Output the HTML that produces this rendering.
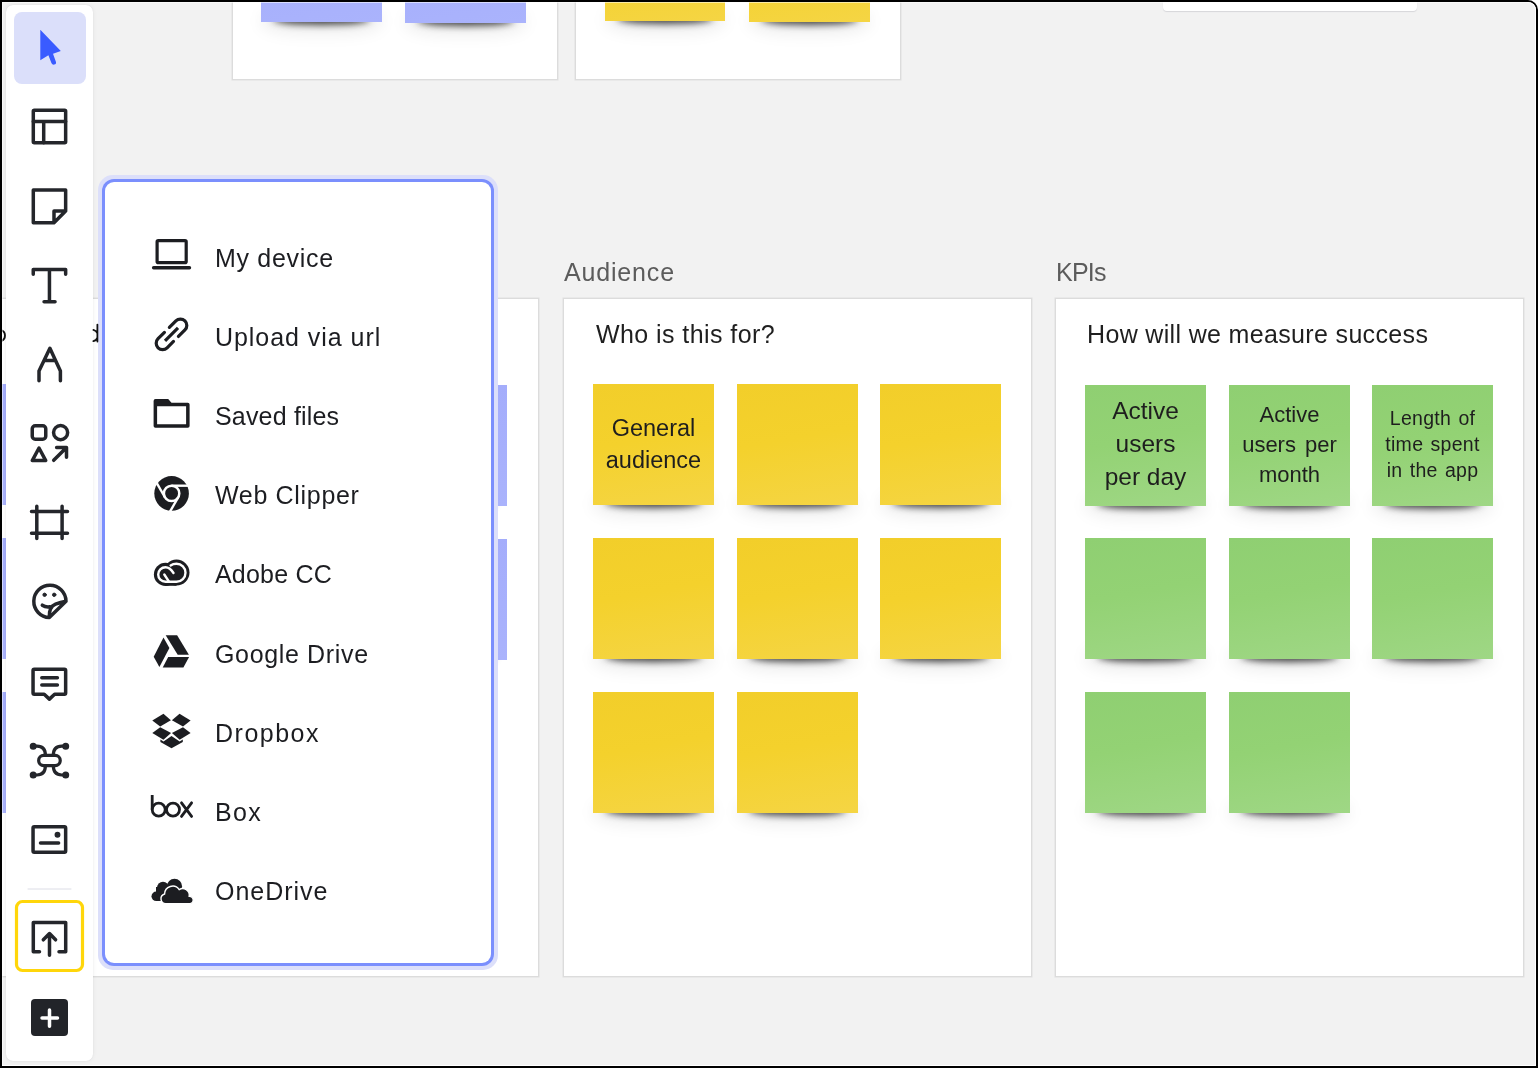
<!DOCTYPE html>
<html><head><meta charset="utf-8">
<style>
*{box-sizing:border-box;margin:0;padding:0}
html,body{width:1538px;height:1068px;overflow:hidden;background:#fff;font-family:"Liberation Sans",sans-serif}
#win{position:absolute;left:0;top:0;width:1538px;height:1068px;border:2px solid #000;border-top-right-radius:10px;overflow:hidden;background:#fff}
#cv{position:absolute;left:0;top:0;right:0;bottom:0;background:#f2f2f2;border-top-right-radius:8px;overflow:hidden}
#ov{position:absolute;left:0;top:0;right:0;bottom:0;border-top-right-radius:8px;box-shadow:inset 0 1px 0 rgba(255,255,255,.55),inset 1px 0 0 rgba(255,255,255,.5),inset -1px 0 0 #fff,inset 0 -1px 0 #fff;pointer-events:none}
/* all children of cv positioned in page coordinates: cv is at (3,3) */
.a{position:absolute}
.frame{position:absolute;background:#fff;border:1px solid #dcdcdc;box-shadow:0 0 0 .6px rgba(0,0,0,.06)}
.st{position:absolute;width:121px;height:121px}
.st .b{position:absolute;left:0;top:0;width:100%;height:100%}
.st .sh{position:absolute;left:12px;right:12px;top:113px;height:11px;background:rgba(30,30,30,.82);filter:blur(3.5px);border-radius:50%}
.st .sh2{position:absolute;left:0;right:0;top:106px;height:28px;background:rgba(0,0,0,.06);filter:blur(7px);border-radius:40%}
.y .b{background:linear-gradient(170deg,#f2ce2a 0%,#f4d12c 45%,#f5d544 100%)}
.g .b{background:linear-gradient(170deg,#8fcf72 0%,#93d274 45%,#9fd785 100%)}
.p .b{background:linear-gradient(170deg,#a3acfb 0%,#a7b0fc 60%,#aab3fc 100%)}
.st .t{position:absolute;will-change:transform;left:0;top:0;width:100%;height:100%;display:flex;align-items:center;justify-content:center;text-align:center;color:#1e1e1e;font-size:23.5px;line-height:31.5px}
.lbl{position:absolute;will-change:transform;color:#5c5c5c;font-size:25px;letter-spacing:.4px;white-space:nowrap}
.ttl{position:absolute;will-change:transform;color:#1f1f1f;font-size:25px;white-space:nowrap}
#tb{position:absolute;left:3px;top:2px;width:87px;height:1056px;background:#fff;border-radius:7px;box-shadow:0 0 1px rgba(40,40,70,.12),0 0 5px rgba(0,0,0,.06)}
#pop{position:absolute;left:95px;top:172px;width:400px;height:795px;border-radius:15px;background:#dcdffa}
#pop .in{position:absolute;left:4px;top:4px;right:4px;bottom:4px;border-radius:12px;background:#7b8ffd}
#pop .in2{position:absolute;left:3px;top:3px;right:3px;bottom:3px;border-radius:9px;background:#fff}
.mi{position:absolute;will-change:transform;margin-top:1px;left:215.3px;font-size:25px;line-height:28px;color:#1c1d21;letter-spacing:.6px;white-space:nowrap}
svg{position:absolute;overflow:visible}
</style></head><body>
<div id="win"><div id="cv">
<!-- content placed with coordinates relative to cv (page - 3) -->
<div class="a" style="left:-2px;top:-2px;width:1538px;height:1068px">

<!-- top frames -->
<div class="frame" style="left:232px;top:-40px;width:326px;height:120px"></div>
<div class="frame" style="left:575px;top:-40px;width:326px;height:120px"></div>
<div class="st p" style="left:261px;top:-99px;width:121px"><div class="sh2"></div><div class="sh"></div><div class="b"></div></div>
<div class="st p" style="left:405px;top:-98px;width:121px"><div class="sh2"></div><div class="sh"></div><div class="b"></div></div>
<div class="st y" style="left:605px;top:-100px;width:120px"><div class="sh2"></div><div class="sh"></div><div class="b"></div></div>
<div class="st y" style="left:749px;top:-99px;width:121px"><div class="sh2"></div><div class="sh"></div><div class="b"></div></div>

<!-- top-right tab -->
<div class="a" style="left:1163px;top:-10.5px;width:254px;height:21px;background:#fff;border-radius:4px;box-shadow:0 1px 1px rgba(60,60,90,.15)"></div>

<!-- main frames -->
<div class="frame" style="left:-200px;top:298px;width:739px;height:679px"></div>
<div class="frame" style="left:563px;top:298px;width:469px;height:679px"></div>
<div class="frame" style="left:1055px;top:298px;width:469px;height:679px"></div>

<div class="lbl" style="left:564px;top:257.5px;letter-spacing:.83px">Audience</div>
<div class="lbl" style="left:1056px;top:257.5px;letter-spacing:-.75px">KPIs</div>
<div class="ttl" style="left:596px;top:320px;letter-spacing:.43px">Who is this for?</div>
<div class="ttl" style="left:1086.6px;top:320px;letter-spacing:.34px">How will we measure success</div>

<!-- yellow stickies -->
<div class="st y" style="left:593px;top:384px"><div class="sh2"></div><div class="sh"></div><div class="b"></div><div class="t">General<br>audience</div></div>
<div class="st y" style="left:737px;top:384px"><div class="sh2"></div><div class="sh"></div><div class="b"></div></div>
<div class="st y" style="left:880px;top:384px"><div class="sh2"></div><div class="sh"></div><div class="b"></div></div>
<div class="st y" style="left:593px;top:538px"><div class="sh2"></div><div class="sh"></div><div class="b"></div></div>
<div class="st y" style="left:737px;top:538px"><div class="sh2"></div><div class="sh"></div><div class="b"></div></div>
<div class="st y" style="left:880px;top:538px"><div class="sh2"></div><div class="sh"></div><div class="b"></div></div>
<div class="st y" style="left:593px;top:692px"><div class="sh2"></div><div class="sh"></div><div class="b"></div></div>
<div class="st y" style="left:737px;top:692px"><div class="sh2"></div><div class="sh"></div><div class="b"></div></div>

<!-- green stickies -->
<div class="st g" style="left:1085px;top:385px"><div class="sh2"></div><div class="sh"></div><div class="b"></div><div class="t" style="font-size:24.5px;line-height:33px;top:-2px">Active<br>users<br>per day</div></div>
<div class="st g" style="left:1229px;top:385px"><div class="sh2"></div><div class="sh"></div><div class="b"></div><div class="t" style="font-size:22px;line-height:30px;top:-1.3px;word-spacing:3px">Active<br>users per<br>month</div></div>
<div class="st g" style="left:1372px;top:385px"><div class="sh2"></div><div class="sh"></div><div class="b"></div><div class="t" style="font-size:19.5px;line-height:26px;top:-2px;letter-spacing:.3px;word-spacing:1.5px">Length of<br>time spent<br>in the app</div></div>
<div class="st g" style="left:1085px;top:538px"><div class="sh2"></div><div class="sh"></div><div class="b"></div></div>
<div class="st g" style="left:1229px;top:538px"><div class="sh2"></div><div class="sh"></div><div class="b"></div></div>
<div class="st g" style="left:1372px;top:538px"><div class="sh2"></div><div class="sh"></div><div class="b"></div></div>
<div class="st g" style="left:1085px;top:692px"><div class="sh2"></div><div class="sh"></div><div class="b"></div></div>
<div class="st g" style="left:1229px;top:692px"><div class="sh2"></div><div class="sh"></div><div class="b"></div></div>

<!-- left hidden stickies -->
<div class="st p" style="left:-115px;top:384px"><div class="sh"></div><div class="b"></div></div>
<div class="st p" style="left:-115px;top:538px"><div class="sh"></div><div class="b"></div></div>
<div class="st p" style="left:-115px;top:692px"><div class="sh"></div><div class="b"></div></div>
<div class="st p" style="left:386px;top:385px"><div class="sh"></div><div class="b"></div></div>
<div class="st p" style="left:386px;top:539px"><div class="sh"></div><div class="b"></div></div>

<!-- toolbar -->
<div id="tb" style="left:6px;top:5px"></div>
<!-- toolbar icons -->
<div class="a" style="left:14px;top:12px;width:72px;height:72px;border-radius:8px;background:#dbdffa"></div>
<svg style="left:0;top:0" width="100" height="1068" viewBox="0 0 100 1068">
<g fill="none" stroke="#24262b" stroke-width="3.5" stroke-linecap="round" stroke-linejoin="round">
 <path d="M40.3 29.8 L60.8 50.9 L53 53.7 L55.9 61.8 Q56.6 64.2 54.2 64.6 Q52.2 64.9 51.4 63 L48.4 55.3 L40.3 60.2 Z" fill="#3a5bff" stroke="none"/>
 <rect x="33.3" y="110.15" width="32.35" height="32.6" rx="1"/>
 <path d="M33.3 121.4 H65.65 M43.7 121.4 V142.75"/>
 <path d="M33.3 190.1 H65.65 V211.1 L54 222.75 H33.3 Z M54 222.75 V211.1 H65.65"/>
 <path d="M33.25 274.2 V269.45 H65.65 V274.2 M49.45 269.45 V301.65 M44.05 301.65 H55.05"/>
 <path d="M39 380.8 V371 L49.9 348.3 L60.4 371 V380.8 M44.6 360.6 H55"/>
 <rect x="32.25" y="425.75" width="13.5" height="13.5" rx="3"/>
 <circle cx="60.6" cy="432.6" r="7.05"/>
 <path d="M39 448 L45.75 460.55 H32.25 Z"/>
 <path d="M53.7 460.3 L66 448 M56.6 447.5 H66.5 V457.3"/>
 <path d="M31.5 511.4 H67.5 M31.5 533.3 H67.5 M36.8 506.3 V538.5 M62.1 506.3 V538.5"/>
 <path d="M66 601.3 A16.1 16.1 0 1 0 49.3 617.5 L66 601.3 M49.3 617.5 Q48.9 606.8 55.5 604.2 Q60.5 602.3 66 601.3 M42.3 605.2 Q45.5 607.4 49.8 606.8"/>
 <circle cx="44.6" cy="594.8" r="1.7" fill="#24262b" stroke-width="1"/>
 <circle cx="54.2" cy="594.8" r="1.7" fill="#24262b" stroke-width="1"/>
 <path d="M34.3 669.25 H64.4 Q65.65 669.25 65.65 670.5 V693 Q65.65 694.25 64.4 694.25 H54.6 L49.4 699.1 L44.2 694.25 H34.3 Q33.05 694.25 33.05 693 V670.5 Q33.05 669.25 34.3 669.25 Z"/>
 <path d="M41.8 677.8 H57.4 M41.8 685 H57.4"/>
 <rect x="38.65" y="755.45" width="21.6" height="10.1" rx="5.05" stroke-width="3.2"/>
 <path d="M33.2 746.2 H37 Q45.4 746.2 45.4 755.4 M65.7 746.2 H61.7 Q53.3 746.2 53.3 755.4 M33.2 775 H37 Q45.4 775 45.4 765.6 M65.7 775 H61.7 Q53.3 775 53.3 765.6" stroke-width="3.2"/>
 <circle cx="33.2" cy="746.2" r="2" fill="#24262b" stroke-width="3"/>
 <circle cx="65.7" cy="746.2" r="2" fill="#24262b" stroke-width="3"/>
 <circle cx="33.2" cy="775" r="2" fill="#24262b" stroke-width="3"/>
 <circle cx="65.7" cy="775" r="2" fill="#24262b" stroke-width="3"/>
 <rect x="33.05" y="826.75" width="32.6" height="25.5" rx="1.2"/>
 <path d="M40.5 843 H58.6"/>
 <circle cx="57.5" cy="834.8" r="1.2" fill="#24262b"/>
 <path d="M28 889 H71" stroke="#dcdde6" stroke-width="1"/>
 <rect x="16.5" y="901.5" width="66" height="69" rx="6" stroke="#ffd60a" stroke-width="3.2"/>
 <path d="M39.5 951.7 H33.3 V922.45 H65.7 V951.7 H59 M49.5 955.2 V933.8 M43.3 939.8 L49.5 933.6 L55.6 939.8"/>
 <rect x="31" y="999" width="37" height="37" rx="4" fill="#222429" stroke="none"/>
 <path d="M42 1018 H57.5 M49.5 1010 V1026.3" stroke="#fff"/>
</g>
</svg>


<!-- popup -->
<div id="pop" style="left:98px;top:175px"><div class="in"><div class="in2"></div></div></div>
<!-- popup items -->
<div class="mi" style="top:243.2px;letter-spacing:0.69px">My device</div>
<div class="mi" style="top:322.0px;letter-spacing:0.95px">Upload via url</div>
<div class="mi" style="top:400.9px;letter-spacing:0.18px">Saved files</div>
<div class="mi" style="top:480.0px;letter-spacing:0.68px">Web Clipper</div>
<div class="mi" style="top:559.3px;letter-spacing:0.20px">Adobe CC</div>
<div class="mi" style="top:639.0px;letter-spacing:0.65px">Google Drive</div>
<div class="mi" style="top:718.0px;letter-spacing:1.50px">Dropbox</div>
<div class="mi" style="top:796.7px;letter-spacing:1.35px">Box</div>
<div class="mi" style="top:875.6px;letter-spacing:0.97px">OneDrive</div>

<svg style="left:0;top:0" width="520" height="1068" viewBox="0 0 520 1068">
<g fill="none" stroke="#1c1d21" stroke-width="3.2" stroke-linecap="round" stroke-linejoin="round">
 <rect x="157.1" y="240.6" width="29.1" height="22" rx="1.2"/>
 <path d="M153.6 267.7 H189.5" stroke-width="3.4"/>
 <g transform="translate(171.5 334.35) rotate(-45)">
  <path d="M3.4 -6.4 H12.6 A6.4 6.4 0 0 1 12.6 6.4 H3.4"/>
  <path d="M-3.6 -6.4 H-12.6 A6.4 6.4 0 0 0 -12.6 6.4 H-3.6"/>
  <path d="M-9.2 0 H9.2" stroke-linecap="butt"/>
 </g>
</g>
<g fill="#1c1d21" stroke="none">
 <path fill-rule="evenodd" d="M155.5 399.1 H168.2 L171.5 402.8 H187.8 Q189.6 402.8 189.6 404.6 V425.9 Q189.6 427.7 187.8 427.7 H155.4 Q153.6 427.7 153.6 425.9 V401 Q153.6 399.1 155.5 399.1 Z M157.1 406.3 H186.1 V424.3 H157.1 Z"/>
 <!-- chrome -->
 <circle cx="171.6" cy="493.4" r="17.3"/>
 <circle cx="171.6" cy="493.4" r="7.7" fill="none" stroke="#fff" stroke-width="2.5"/>
 <g stroke="#fff" stroke-width="2.4" stroke-linecap="butt">
  <path d="M171.6 485.7 H192"/>
  <path d="M178.27 497.25 L168.3 514.5"/>
  <path d="M164.93 497.25 L154.9 479.9"/>
 </g>
 <!-- adobe cc -->
 <circle cx="176.5" cy="572.6" r="13"/>
 <circle cx="165.5" cy="574.4" r="11.6"/>
 <rect x="165.5" y="574" width="11" height="11.8"/>
 <g fill="none" stroke="#fff" stroke-width="2.4" stroke-linecap="round">
  <path d="M173.5 573 Q169.8 567.3 165.5 567.3 A7.3 7.2 0 0 0 165.5 581.7 H176.5 A9 9 0 0 0 176.5 563.7 Q173 563.7 170.6 565.4"/>
  <path d="M164.3 574.5 L169 581.7"/>
 </g>
 <!-- google drive -->
 <path d="M165.7 635.3 H177.1 L188.9 654.8 H177.7 Z"/>
 <path d="M163.5 637.5 L169.4 647.9 L159.4 667 L153.7 656.7 Z"/>
 <path d="M168.2 657.1 H189.1 L183.4 667.5 H162.7 Z"/>
 <!-- dropbox -->
 <path d="M163.45 713.8 L170.9 720.2 L160.2 726.5 L152.3 720.4 Z"/>
 <path d="M179.5 713.8 L190.6 720.6 L183 726.5 L171.9 720.2 Z"/>
 <path d="M160.2 727.2 L171.1 733.1 L163.45 739.7 L152.3 732.9 Z"/>
 <path d="M183 727.2 L190.6 732.9 L179.7 739.7 L171.9 733.1 Z"/>
 <path d="M160.4 739.6 L163.5 741.6 L171.5 736 L179.7 741.6 L182.8 739.6 V741.9 L171.5 748.2 L160.4 741.9 Z"/>
</g>
<g fill="none" stroke="#1c1d21" stroke-width="2.8" stroke-linecap="butt">
 <path d="M152.2 795 V809.6"/>
 <circle cx="158.7" cy="809.6" r="6.5"/>
 <circle cx="173" cy="809.6" r="6.5"/>
 <path d="M181.5 802.8 L191.6 816.4 M191.6 802.8 L181.5 816.4" stroke-linecap="round"/>
</g>
<g fill="#1c1d21" stroke="none">
 <!-- onedrive back -->
 <circle cx="156.3" cy="896.3" r="4.8"/>
 <circle cx="163" cy="887.8" r="6"/>
 <circle cx="174.5" cy="886.4" r="7.6"/>
 <rect x="156" y="887" width="12" height="14"/>
 <!-- onedrive front with white outline -->
 <g stroke="#fff" stroke-width="1.4">
  <path d="M165.8 903.8 A5 5 0 0 1 164.6 894 A8 8 0 0 1 179.2 889.6 A6.6 6.6 0 0 1 189.2 896.2 A3.8 3.8 0 0 1 189.6 903.8 Z"/>
 </g>
</g>
</svg>


<svg style="left:0;top:0" width="110" height="360" viewBox="0 0 110 360"><g fill="none" stroke="#111" stroke-width="1.8" stroke-linecap="round">
<path d="M-2 329.6 Q5 330.2 5 335.5 Q5 341.2 -2 341.5"/>
<path d="M97.4 324.6 V341.6 M93.4 329.9 Q96.4 330.6 97.3 333.2 M93.4 341.2 Q96.4 340.6 97.3 337.8"/>
</g></svg>
</div>
</div><div id="ov"></div></div>
</body></html>
